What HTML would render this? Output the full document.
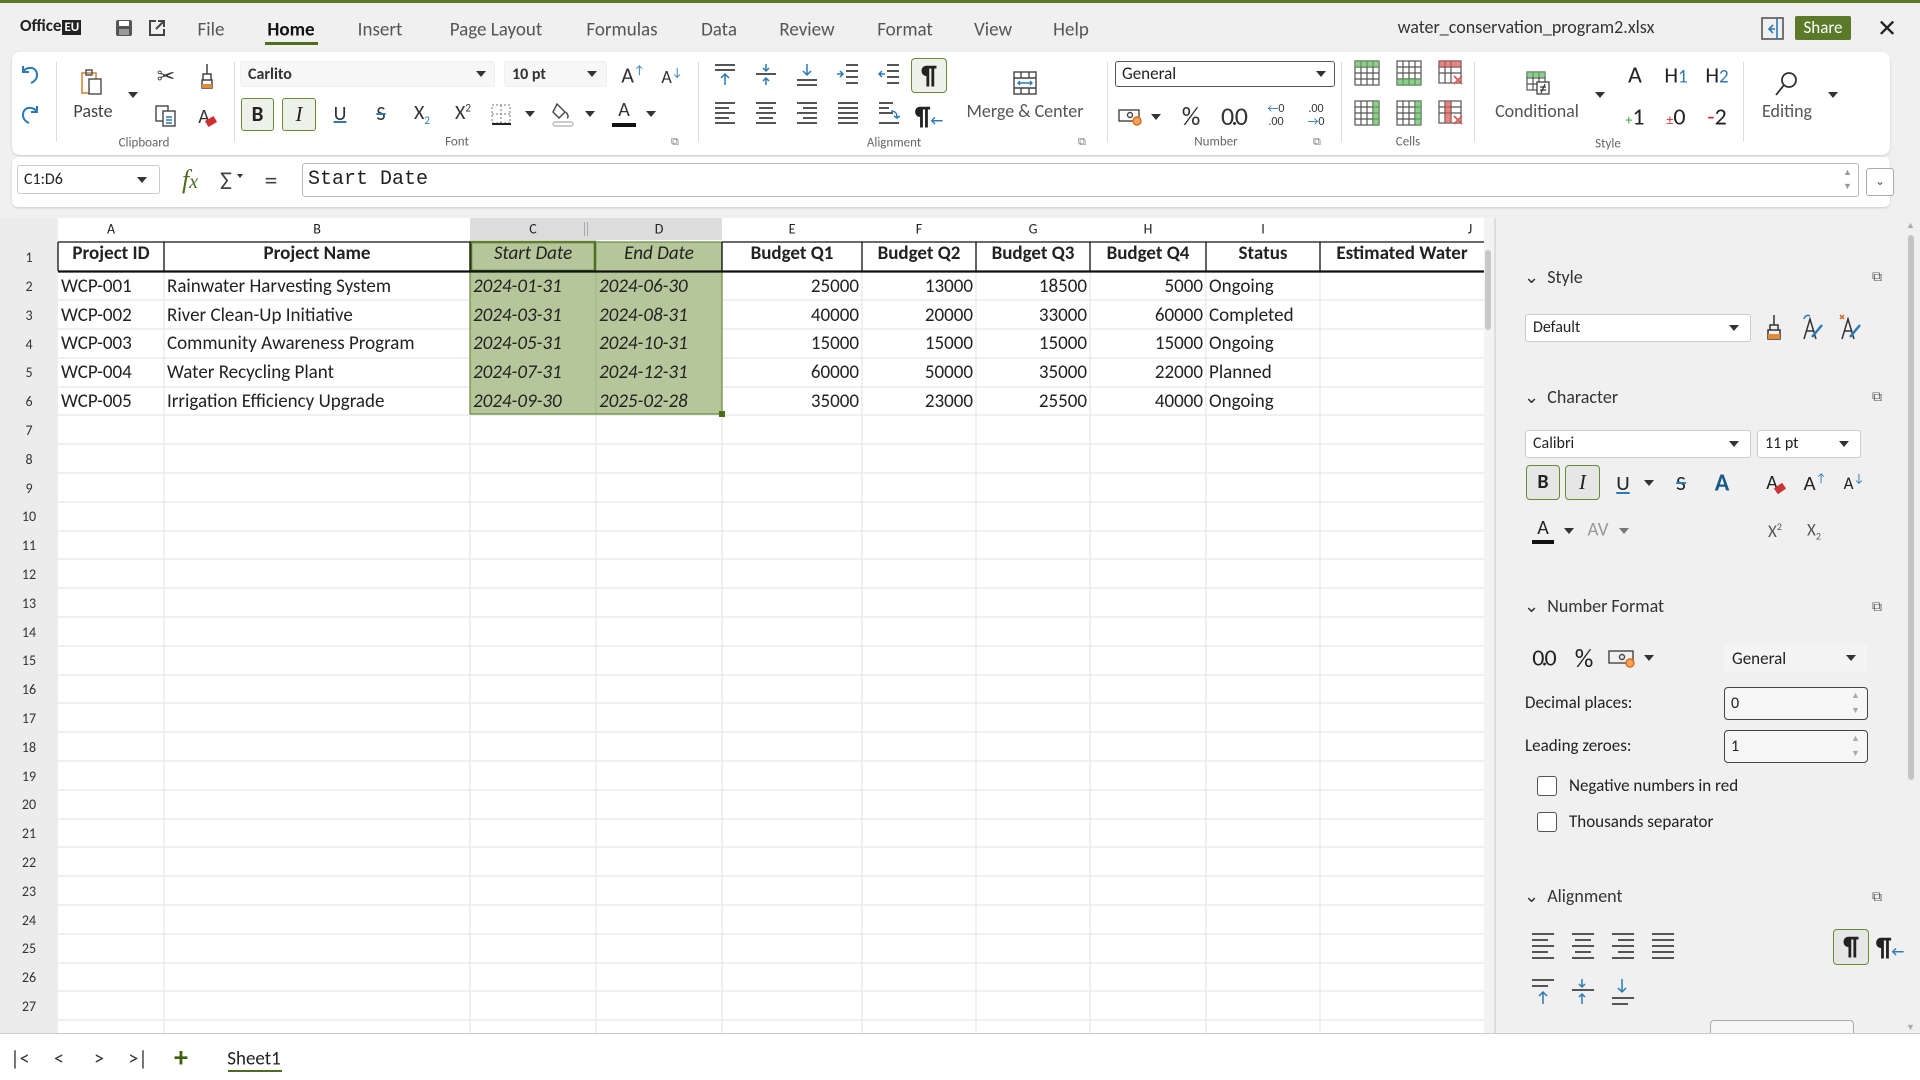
<!DOCTYPE html>
<html><head><meta charset="utf-8">
<style>
*{box-sizing:border-box;margin:0;padding:0}
body{width:1920px;height:1080px;overflow:hidden;background:#f0f0f0;font-family:"Carlito","Liberation Sans",sans-serif;color:#222;position:relative}
.a{position:absolute;white-space:nowrap}
.c{transform:translate(-50%,-50%)}
.tab{font-size:19px;color:#555}
.lbl{font-size:13px;color:#666}
.ib{font-size:20px;color:#333}
.dd{background:#fff;border:1px solid #ccc;border-radius:3px;font-size:16px;padding:3px 7px}
.tri{width:0;height:0;border-left:5px solid transparent;border-right:5px solid transparent;border-top:6px solid #333;position:absolute}
.sep{position:absolute;top:62px;width:1px;height:80px;background:#ddd}
.cell{position:absolute;height:29px;line-height:29px;font-size:19px;overflow:hidden;padding:0 3px}
.rh{position:absolute;left:0;width:58px;text-align:center;font-size:14px;color:#333}
.sb{font-size:18px;color:#333}
</style></head><body>
<div class="a" style="left:0;top:0;width:1920px;height:3px;background:#5a7a2a"></div>
<!-- title row -->
<div class="a" style="left:20px;top:15px;font-size:17px;font-weight:bold;color:#222">Office<span style="background:#222;color:#fff;font-size:13px;padding:0 2px;margin-left:1px">EU</span></div>
<svg class="a" style="left:115px;top:19px" width="18" height="18"><rect x="1" y="1" width="16" height="16" rx="2" fill="#555"/><rect x="4" y="2" width="10" height="5" fill="#fff"/><rect x="4" y="10" width="10" height="6" fill="#999"/></svg>
<svg class="a" style="left:148px;top:19px" width="18" height="18" fill="none" stroke="#444" stroke-width="2"><path d="M8 2H2v14h14v-6M10 2h6v6M16 2 8 10"/></svg>
<div class="a tab c" style="left:211px;top:30px">File</div>
<div class="a c" style="left:291px;top:30px;font-size:19px;font-weight:bold;color:#111">Home</div>
<div class="a" style="left:265px;top:42px;width:53px;height:3px;background:#4e6e1e"></div>
<div class="a tab c" style="left:380px;top:30px">Insert</div>
<div class="a tab c" style="left:496px;top:30px">Page Layout</div>
<div class="a tab c" style="left:622px;top:30px">Formulas</div>
<div class="a tab c" style="left:719px;top:30px">Data</div>
<div class="a tab c" style="left:807px;top:30px">Review</div>
<div class="a tab c" style="left:905px;top:30px">Format</div>
<div class="a tab c" style="left:993px;top:30px">View</div>
<div class="a tab c" style="left:1071px;top:30px">Help</div>
<div class="a c" style="left:1526px;top:27px;font-size:18px;color:#333">water_conservation_program2.xlsx</div>
<svg class="a" style="left:1761px;top:17px" width="23" height="23" fill="none" stroke="#2a7ab8" stroke-width="1.6"><rect x="1" y="1" width="21" height="21" stroke="#555"/><path d="M16 1v21M12 8l-4 4 4 4M8 12h6"/></svg>
<div class="a" style="left:1795px;top:16px;width:56px;height:24px;background:#5a7a2a;color:#fff;font-size:17px;text-align:center;line-height:24px;border-radius:2px">Share</div>
<div class="a c" style="left:1887px;top:29px;font-size:24px;color:#222">✕</div>

<!-- ribbon panel -->
<div class="a" style="left:12px;top:52px;width:1878px;height:103px;background:#fff;border-radius:8px;box-shadow:0 1px 2px #ccc"></div>
<div class="sep" style="left:56px"></div><div class="sep" style="left:234px"></div><div class="sep" style="left:698px"></div><div class="sep" style="left:1107px"></div><div class="sep" style="left:1341px"></div><div class="sep" style="left:1474px"></div><div class="sep" style="left:1743px"></div>
<svg class="a" style="left:18px;top:62px" width="24" height="24" fill="none" stroke="#2a7ab8" stroke-width="2"><path d="M5 4v6h6M5 10c3-6 14-6 14 3 0 4-3 7-6 8"/></svg>
<svg class="a" style="left:18px;top:102px" width="24" height="24" fill="none" stroke="#2a7ab8" stroke-width="2"><path d="M19 4v6h-6M19 10C16 4 5 4 5 13c0 4 3 7 6 8"/></svg>
<svg class="a" style="left:80px;top:69px" width="26" height="28" fill="none" stroke="#555" stroke-width="1.5"><rect x="2" y="4" width="14" height="20" stroke="#d08030"/><rect x="9" y="10" width="12" height="15" fill="#fff"/><rect x="6" y="1" width="6" height="5"/></svg>
<div class="a c ib" style="left:93px;top:111px;font-size:18px;color:#444">Paste</div>
<div class="tri" style="left:128px;top:92px"></div>
<div class="a c ib" style="left:166px;top:76px;font-size:22px">✂</div>
<svg class="a" style="left:198px;top:63px" width="18" height="26" fill="none" stroke="#444" stroke-width="1.5"><path d="M9 1v10M5 11h8v6H5zM4 17h10v8H4z"/><path d="M4 21h10v4H4z" fill="#e08a3a" stroke="none"/></svg>
<svg class="a" style="left:154px;top:104px" width="24" height="24" fill="none" stroke="#444" stroke-width="1.4"><rect x="2" y="2" width="12" height="15"/><rect x="9" y="7" width="12" height="15" fill="#fff"/><path d="M12 13h6M12 16h6M12 19h6" stroke="#2a7ab8"/></svg>
<div class="a c" style="left:204px;top:117px;font-size:20px;color:#333">A</div><div class="a" style="left:206px;top:118px;width:10px;height:7px;background:#d03030;transform:rotate(-30deg)"></div>
<div class="a c lbl" style="left:144px;top:143px">Clipboard</div>

<div class="a dd" style="left:240px;top:61px;width:255px;height:26px;background:#f7f7f7;border-color:#f0f0f0;font-weight:bold;color:#333">Carlito</div><div class="tri" style="left:476px;top:71px"></div>
<div class="a dd" style="left:504px;top:61px;width:103px;height:26px;background:#f7f7f7;border-color:#f0f0f0;font-weight:bold;color:#333">10 pt</div><div class="tri" style="left:587px;top:71px"></div>
<div class="a c" style="left:633px;top:75px;font-size:22px;color:#333">A<sup style="font-size:12px;color:#2a7ab8">↑</sup></div>
<div class="a c" style="left:672px;top:77px;font-size:18px;color:#333">A<sup style="font-size:12px;color:#2a7ab8">↓</sup></div>
<div class="a" style="left:241px;top:98px;width:33px;height:33px;border:1.5px solid #6a8a3a;border-radius:3px;background:#eef0ea;font-size:21px;font-weight:bold;text-align:center;line-height:30px">B</div>
<div class="a" style="left:282px;top:98px;width:34px;height:33px;border:1.5px solid #6a8a3a;border-radius:3px;background:#eef0ea;font-size:21px;font-style:italic;font-family:'Liberation Serif',serif;text-align:center;line-height:30px">I</div>
<div class="a c ib" style="left:340px;top:114px;text-decoration:underline;text-decoration-color:#2a7ab8">U</div>
<div class="a c ib" style="left:381px;top:114px;text-decoration:line-through;text-decoration-color:#2a7ab8">S</div>
<div class="a c ib" style="left:422px;top:114px">X<sub style="font-size:11px;color:#2a7ab8">2</sub></div>
<div class="a c ib" style="left:463px;top:113px">X<sup style="font-size:11px">2</sup></div>
<svg class="a" style="left:490px;top:103px" width="22" height="22" fill="none" stroke="#777" stroke-dasharray="2 2"><rect x="2" y="2" width="18" height="18"/><path d="M11 2v18M2 11h18"/><path d="M2 21h19" stroke="#222" stroke-dasharray="none" stroke-width="2"/></svg>
<div class="tri" style="left:525px;top:111px"></div>
<svg class="a" style="left:552px;top:101px" width="22" height="26" fill="none" stroke="#444" stroke-width="1.4"><path d="M5 3l8 8-6 6-6-6zM14 11c2 3 3 5 1 6" /><rect x="1" y="21" width="20" height="4" rx="2" stroke="#bbb"/></svg>
<div class="tri" style="left:585px;top:111px"></div>
<div class="a c ib" style="left:624px;top:110px">A</div><div class="a" style="left:612px;top:123px;width:24px;height:4px;background:#111"></div>
<div class="tri" style="left:646px;top:111px"></div>
<div class="a c lbl" style="left:457px;top:142px">Font</div>
<div class="a" style="left:671px;top:135px;font-size:11px;color:#777">⧉</div>

<!-- alignment icons -->
<svg class="a" style="left:713px;top:63px" width="240" height="70" fill="none" stroke="#555" stroke-width="2">
<g transform="translate(0,0)"><path d="M2 2h20M2 7h20"/><path d="M12 22V11M8 15l4-4 4 4" stroke="#2a7ab8" stroke-width="1.5"/></g>
<g transform="translate(41,0)"><path d="M2 11h20"/><path d="M12 1v7M9 5l3 3 3-3M12 22v-7M9 18l3-3 3 3" stroke="#2a7ab8" stroke-width="1.5"/></g>
<g transform="translate(82,0)"><path d="M2 17h20M2 22h20"/><path d="M12 1v11M8 8l4 4 4-4" stroke="#2a7ab8" stroke-width="1.5"/></g>
<g transform="translate(123,0)"><path d="M10 2h12M10 8h12M10 14h12M10 20h12"/><path d="M1 11h6M4 8l3 3-3 3" stroke="#2a7ab8" stroke-width="1.5"/></g>
<g transform="translate(164,0)"><path d="M10 2h12M10 8h12M10 14h12M10 20h12"/><path d="M8 11H2M5 8l-3 3 3 3" stroke="#2a7ab8" stroke-width="1.5"/></g>
<g transform="translate(0,38)"><path d="M2 2h20M2 7h14M2 12h20M2 17h14M2 22h20"/></g>
<g transform="translate(41,38)"><path d="M2 2h20M5 7h14M2 12h20M5 17h14M2 22h20"/></g>
<g transform="translate(82,38)"><path d="M2 2h20M8 7h14M2 12h20M8 17h14M2 22h20"/></g>
<g transform="translate(123,38)"><path d="M2 2h20M2 7h20M2 12h20M2 17h20M2 22h20"/></g>
<g transform="translate(164,38)"><path d="M2 2h14M2 7h10M2 12h14M2 22h20"/><path d="M14 10c5 0 6 3 6 7l-3-2M20 17l3-2" stroke="#2a7ab8" stroke-width="1.5"/></g>
</svg>
<div class="a" style="left:911px;top:58px;width:36px;height:35px;border:1.5px solid #6a8a3a;border-radius:4px;background:#eef0ea;font-size:26px;text-align:center;line-height:32px;font-weight:bold">¶</div>
<div class="a c" style="left:929px;top:116px;font-size:26px;font-weight:bold">¶<span style="font-size:14px;color:#2a7ab8">←</span></div>
<svg class="a" style="left:1012px;top:70px" width="26" height="26" fill="none" stroke="#444" stroke-width="1.4"><rect x="2" y="2" width="22" height="22"/><path d="M2 8h22M2 18h22M9 2v6M17 2v6M9 18v6M17 18v6"/><path d="M6 13h14M8 11l-2 2 2 2M18 11l2 2-2 2" stroke="#2a7ab8"/></svg>
<div class="a c" style="left:1025px;top:111px;font-size:18px;color:#555">Merge &amp; Center</div>
<div class="a c lbl" style="left:894px;top:143px">Alignment</div>
<div class="a" style="left:1078px;top:135px;font-size:11px;color:#777">⧉</div>

<div class="a dd" style="left:1115px;top:61px;width:220px;height:26px;border:1.5px solid #555;font-size:17px;padding:1px 6px">General</div><div class="tri" style="left:1316px;top:71px"></div>
<svg class="a" style="left:1118px;top:106px" width="26" height="22" fill="none" stroke="#444" stroke-width="1.4"><rect x="1" y="4" width="20" height="11"/><circle cx="12" cy="9" r="2.5"/><circle cx="19" cy="15" r="4" fill="#f3a460" stroke="#e06a10"/></svg>
<div class="tri" style="left:1151px;top:114px"></div>
<div class="a c" style="left:1191px;top:116px;font-size:26px;color:#333">%</div>
<div class="a c" style="left:1233px;top:116px;font-size:26px;color:#333;letter-spacing:-3px">0.0</div>
<div class="a c" style="left:1276px;top:116px;font-size:12px;line-height:13px;text-align:center;color:#333"><span style="color:#2a7ab8">←</span>0<br>.00</div>
<div class="a c" style="left:1316px;top:116px;font-size:12px;line-height:13px;text-align:center;color:#333">.00<br><span style="color:#2a7ab8">→</span>0</div>
<div class="a c lbl" style="left:1216px;top:142px">Number</div>
<div class="a" style="left:1313px;top:135px;font-size:11px;color:#777">⧉</div>

<!-- cells -->
<svg class="a" style="left:1353px;top:59px" width="112" height="70" fill="none" stroke="#555" stroke-width="1.2">
<g><rect x="2" y="2" width="24" height="24"/><path d="M2 8h24M2 14h24M2 20h24M8 2v24M14 2v24M20 2v24"/><rect x="2" y="2" width="24" height="6" fill="#5cb85c" stroke="none" opacity=".7"/></g>
<g transform="translate(42,0)"><rect x="2" y="2" width="24" height="24"/><path d="M2 8h24M2 14h24M2 20h24M8 2v24M14 2v24M20 2v24"/><rect x="2" y="20" width="24" height="6" fill="#5cb85c" stroke="none" opacity=".7"/></g>
<g transform="translate(84,0)"><rect x="2" y="2" width="22" height="22"/><path d="M2 8h22M2 14h22M8 2v22M14 2v22"/><rect x="2" y="2" width="22" height="6" fill="#d9534f" stroke="none" opacity=".7"/><path d="M17 17l8 8M25 17l-8 8" stroke="#d9534f" stroke-width="1.6"/></g>
<g transform="translate(0,40)"><rect x="2" y="2" width="24" height="24"/><path d="M2 8h24M2 14h24M2 20h24M8 2v24M14 2v24M20 2v24"/><rect x="20" y="2" width="6" height="24" fill="#5cb85c" stroke="none" opacity=".7"/></g>
<g transform="translate(42,40)"><rect x="2" y="2" width="24" height="24"/><path d="M2 8h24M2 14h24M2 20h24M8 2v24M14 2v24M20 2v24"/><rect x="20" y="2" width="6" height="24" fill="#5cb85c" stroke="none" opacity=".7"/></g>
<g transform="translate(84,40)"><rect x="2" y="2" width="22" height="22"/><path d="M2 8h22M2 14h22M8 2v22M14 2v22"/><rect x="8" y="2" width="6" height="22" fill="#d9534f" stroke="none" opacity=".7"/><path d="M17 17l8 8M25 17l-8 8" stroke="#d9534f" stroke-width="1.6"/></g>
</svg>
<div class="a c lbl" style="left:1408px;top:142px">Cells</div>

<svg class="a" style="left:1525px;top:70px" width="26" height="26" fill="none" stroke="#555" stroke-width="1.2"><rect x="2" y="2" width="18" height="18"/><path d="M2 8h18M2 14h18M8 2v18M14 2v18"/><rect x="2" y="2" width="18" height="5" fill="#5cb85c" stroke="none" opacity=".7"/><rect x="12" y="12" width="12" height="12" fill="#fff" stroke="#333"/><path d="M15 17h6M15 20h6M20 14l-4 9" stroke="#333"/></svg>
<div class="a c" style="left:1537px;top:111px;font-size:18px;color:#555">Conditional</div>
<div class="tri" style="left:1595px;top:92px"></div>
<div class="a c" style="left:1635px;top:75px;font-size:24px">A</div>
<div class="a c" style="left:1676px;top:75px;font-size:22px">H<span style="color:#2a7ab8;font-size:19px">1</span></div>
<div class="a c" style="left:1717px;top:75px;font-size:22px">H<span style="color:#2a7ab8;font-size:19px">2</span></div>
<div class="a c" style="left:1635px;top:117px;font-size:24px"><span style="color:#3a9a3a;font-size:14px">+</span>1</div>
<div class="a c" style="left:1676px;top:117px;font-size:24px"><span style="color:#c33;font-size:14px">±</span>0</div>
<div class="a c" style="left:1717px;top:117px;font-size:24px"><span style="color:#c33">-</span>2</div>
<div class="a c lbl" style="left:1608px;top:144px">Style</div>
<svg class="a" style="left:1774px;top:70px" width="26" height="28" fill="none" stroke="#333" stroke-width="1.8"><circle cx="15" cy="10" r="7"/><path d="M10 15 2 25"/></svg>
<div class="a c" style="left:1787px;top:111px;font-size:18px;color:#555">Editing</div>
<div class="tri" style="left:1828px;top:92px"></div>

<!-- formula bar -->
<div class="a" style="left:12px;top:157px;width:1878px;height:50px;background:#fff;border-radius:6px;box-shadow:0 1px 2px #ccc"></div>
<div class="a dd" style="left:17px;top:165px;width:143px;height:29px;font-size:16px;padding:4px 6px">C1:D6</div><div class="tri" style="left:137px;top:177px"></div>
<div class="a c" style="left:190px;top:180px;font-size:26px;font-style:italic;font-family:'Liberation Serif',serif;color:#4e6e1e">f<span style="font-size:20px">x</span></div>
<div class="a c" style="left:226px;top:180px;font-size:26px;color:#444">Σ</div><div class="tri" style="left:237px;top:174px;border-width:4px 3px;border-left-width:3px;border-right-width:3px;border-top-width:4px"></div>
<div class="a c" style="left:271px;top:180px;font-size:26px;color:#444">=</div>
<div class="a" style="left:302px;top:163px;width:1557px;height:34px;border:1px solid #bbb;border-radius:3px;background:#fff;font-family:'Liberation Mono',monospace;font-size:20px;padding:4px 5px">Start Date</div>
<div class="a" style="left:1843px;top:166px;font-size:9px;color:#999;line-height:14px">▲<br>▼</div>
<div class="a" style="left:1866px;top:168px;width:28px;height:28px;border:1px solid #aaa;border-radius:3px;background:#fff;font-size:12px;text-align:center;line-height:26px;color:#555">⌄</div>

<!-- grid -->
<div class="a" style="left:58px;top:218px;width:1426px;height:817px;background:#fff"></div>
<div class="a" style="left:0;top:218px;width:58px;height:817px;background:#ececec"></div>
<div class="a" style="left:470px;top:218px;width:252px;height:22px;background:#dcdcdc"></div>
<svg class="a" style="left:0;top:218px" width="1484" height="817">
<g stroke="#e2e2e2" stroke-width="1">
<path d="M164 22V817M470 22V817M596 22V817M722 22V817M862 22V817M976 22V817M1090 22V817M1206 22V817M1320 22V817"/>
<path id="hl" d="M58 82H1484M58 111H1484M58 140H1484M58 169H1484M58 197H1484M58 226H1484M58 255H1484M58 284H1484M58 313H1484M58 341H1484M58 370H1484M58 399H1484M58 428H1484M58 457H1484M58 485H1484M58 514H1484M58 543H1484M58 572H1484M58 601H1484M58 629H1484M58 658H1484M58 687H1484M58 716H1484M58 745H1484M58 773H1484M58 802H1484"/>
</g>
<rect x="470" y="24" width="252" height="172" fill="#b4c69a"/>
<path d="M596 54V196" stroke="#9fb482"/>
<rect x="471" y="24" width="124" height="29" fill="none" stroke="#4e6e1e" stroke-width="2.5"/>
<rect x="470" y="24" width="252" height="172" fill="none" stroke="#6a8a3a" stroke-width="1.2"/>
<rect x="719" y="193" width="6" height="6" fill="#4e6e1e"/>
<g stroke="#111" stroke-width="1.3"><path d="M58 24H470M722 24H1484M58 24V53M164 24V53M470 24V53M722 24V53M862 24V53M976 24V53M1090 24V53M1206 24V53M1320 24V53"/></g>
<path d="M58 53.5H1484" stroke="#111" stroke-width="2.2"/>
</svg>
<div class="a" style="left:1484px;top:218px;width:10px;height:817px;background:#f3f3f3"></div>
<div class="a" style="left:1485px;top:250px;width:6px;height:80px;background:#c8c8c8;border-radius:3px"></div>
<!-- col headers -->
<div class="a c" style="left:111px;top:229px;font-size:14px">A</div>
<div class="a c" style="left:317px;top:229px;font-size:14px">B</div>
<div class="a c" style="left:533px;top:229px;font-size:14px">C</div>
<div class="a" style="left:584px;top:222px;width:4px;height:14px;border-left:1px solid #aaa;border-right:1px solid #aaa"></div>
<div class="a c" style="left:659px;top:229px;font-size:14px">D</div>
<div class="a c" style="left:792px;top:229px;font-size:14px">E</div>
<div class="a c" style="left:919px;top:229px;font-size:14px">F</div>
<div class="a c" style="left:1033px;top:229px;font-size:14px">G</div>
<div class="a c" style="left:1148px;top:229px;font-size:14px">H</div>
<div class="a c" style="left:1263px;top:229px;font-size:14px">I</div>
<div class="a c" style="left:1470px;top:229px;font-size:14px">J</div>
<!-- row numbers -->
<div class="rh" style="top:249px">1</div><div class="rh" style="top:278px">2</div><div class="rh" style="top:307px">3</div><div class="rh" style="top:336px">4</div><div class="rh" style="top:364px">5</div><div class="rh" style="top:393px">6</div><div class="rh" style="top:422px">7</div><div class="rh" style="top:451px">8</div><div class="rh" style="top:480px">9</div><div class="rh" style="top:508px">10</div><div class="rh" style="top:537px">11</div><div class="rh" style="top:566px">12</div><div class="rh" style="top:595px">13</div><div class="rh" style="top:624px">14</div><div class="rh" style="top:652px">15</div><div class="rh" style="top:681px">16</div><div class="rh" style="top:710px">17</div><div class="rh" style="top:739px">18</div><div class="rh" style="top:768px">19</div><div class="rh" style="top:796px">20</div><div class="rh" style="top:825px">21</div><div class="rh" style="top:854px">22</div><div class="rh" style="top:883px">23</div><div class="rh" style="top:912px">24</div><div class="rh" style="top:940px">25</div><div class="rh" style="top:969px">26</div><div class="rh" style="top:998px">27</div>
<!-- row1 headers -->
<div style="font-weight:bold">
<div class="cell" style="left:58px;top:239px;width:106px;text-align:center">Project ID</div>
<div class="cell" style="left:164px;top:239px;width:306px;text-align:center">Project Name</div>
<div class="cell" style="left:470px;top:239px;width:126px;text-align:center;font-style:italic;font-weight:normal">Start Date</div>
<div class="cell" style="left:596px;top:239px;width:126px;text-align:center;font-style:italic;font-weight:normal">End Date</div>
<div class="cell" style="left:722px;top:239px;width:140px;text-align:center">Budget Q1</div>
<div class="cell" style="left:862px;top:239px;width:114px;text-align:center">Budget Q2</div>
<div class="cell" style="left:976px;top:239px;width:114px;text-align:center">Budget Q3</div>
<div class="cell" style="left:1090px;top:239px;width:116px;text-align:center">Budget Q4</div>
<div class="cell" style="left:1206px;top:239px;width:114px;text-align:center">Status</div>
<div class="cell" style="left:1320px;top:239px;width:164px;text-align:center">Estimated Water</div>
</div>
<!-- data rows -->
<div class="cell" style="left:58px;top:272px">WCP-001</div><div class="cell" style="left:164px;top:272px">Rainwater Harvesting System</div><div class="cell" style="left:470px;top:272px;font-style:italic">2024-01-31</div><div class="cell" style="left:596px;top:272px;font-style:italic">2024-06-30</div><div class="cell" style="left:722px;top:272px;width:140px;text-align:right">25000</div><div class="cell" style="left:862px;top:272px;width:114px;text-align:right">13000</div><div class="cell" style="left:976px;top:272px;width:114px;text-align:right">18500</div><div class="cell" style="left:1090px;top:272px;width:116px;text-align:right">5000</div><div class="cell" style="left:1206px;top:272px">Ongoing</div>
<div class="cell" style="left:58px;top:301px">WCP-002</div><div class="cell" style="left:164px;top:301px">River Clean-Up Initiative</div><div class="cell" style="left:470px;top:301px;font-style:italic">2024-03-31</div><div class="cell" style="left:596px;top:301px;font-style:italic">2024-08-31</div><div class="cell" style="left:722px;top:301px;width:140px;text-align:right">40000</div><div class="cell" style="left:862px;top:301px;width:114px;text-align:right">20000</div><div class="cell" style="left:976px;top:301px;width:114px;text-align:right">33000</div><div class="cell" style="left:1090px;top:301px;width:116px;text-align:right">60000</div><div class="cell" style="left:1206px;top:301px">Completed</div>
<div class="cell" style="left:58px;top:329px">WCP-003</div><div class="cell" style="left:164px;top:329px">Community Awareness Program</div><div class="cell" style="left:470px;top:329px;font-style:italic">2024-05-31</div><div class="cell" style="left:596px;top:329px;font-style:italic">2024-10-31</div><div class="cell" style="left:722px;top:329px;width:140px;text-align:right">15000</div><div class="cell" style="left:862px;top:329px;width:114px;text-align:right">15000</div><div class="cell" style="left:976px;top:329px;width:114px;text-align:right">15000</div><div class="cell" style="left:1090px;top:329px;width:116px;text-align:right">15000</div><div class="cell" style="left:1206px;top:329px">Ongoing</div>
<div class="cell" style="left:58px;top:358px">WCP-004</div><div class="cell" style="left:164px;top:358px">Water Recycling Plant</div><div class="cell" style="left:470px;top:358px;font-style:italic">2024-07-31</div><div class="cell" style="left:596px;top:358px;font-style:italic">2024-12-31</div><div class="cell" style="left:722px;top:358px;width:140px;text-align:right">60000</div><div class="cell" style="left:862px;top:358px;width:114px;text-align:right">50000</div><div class="cell" style="left:976px;top:358px;width:114px;text-align:right">35000</div><div class="cell" style="left:1090px;top:358px;width:116px;text-align:right">22000</div><div class="cell" style="left:1206px;top:358px">Planned</div>
<div class="cell" style="left:58px;top:387px">WCP-005</div><div class="cell" style="left:164px;top:387px">Irrigation Efficiency Upgrade</div><div class="cell" style="left:470px;top:387px;font-style:italic">2024-09-30</div><div class="cell" style="left:596px;top:387px;font-style:italic">2025-02-28</div><div class="cell" style="left:722px;top:387px;width:140px;text-align:right">35000</div><div class="cell" style="left:862px;top:387px;width:114px;text-align:right">23000</div><div class="cell" style="left:976px;top:387px;width:114px;text-align:right">25500</div><div class="cell" style="left:1090px;top:387px;width:116px;text-align:right">40000</div><div class="cell" style="left:1206px;top:387px">Ongoing</div>

<!-- sidebar -->
<div class="a" style="left:1494px;top:218px;width:2px;height:817px;background:#ddd"></div>
<div class="a" style="left:1908px;top:235px;width:6px;height:545px;background:#c4c4c4;border-radius:3px"></div>
<div class="a" style="left:1906px;top:220px;font-size:9px;color:#aaa">▲</div>
<div class="a" style="left:1906px;top:1022px;font-size:9px;color:#aaa">▼</div>
<div class="a sb" style="left:1524px;top:266px">⌄&nbsp; Style</div>
<div class="a sb" style="left:1524px;top:386px">⌄&nbsp; Character</div>
<div class="a sb" style="left:1524px;top:595px">⌄&nbsp; Number Format</div>
<div class="a sb" style="left:1524px;top:885px">⌄&nbsp; Alignment</div>
<div class="a" style="left:1872px;top:268px;font-size:14px;color:#555">⧉</div>
<div class="a" style="left:1872px;top:388px;font-size:14px;color:#555">⧉</div>
<div class="a" style="left:1872px;top:598px;font-size:14px;color:#555">⧉</div>
<div class="a" style="left:1872px;top:888px;font-size:14px;color:#555">⧉</div>
<div class="a dd" style="left:1525px;top:314px;width:226px;height:28px;font-size:16px">Default</div><div class="tri" style="left:1729px;top:325px"></div>
<svg class="a" style="left:1764px;top:313px" width="100" height="30" fill="none" stroke="#333" stroke-width="1.5"><path d="M10 2v10M6 12h8v5H6zM4 17h12v9H4z"/><rect x="4" y="21" width="12" height="5" fill="#e08a3a" stroke="none"/>
<g transform="translate(36,0)"><path d="M4 26 10 6l6 20M6 18h8"/><path d="M12 24l10-12" stroke="#2a7ab8" stroke-width="2.5"/><path d="M4 6a4 4 0 0 1 6-3" stroke="#2a7ab8"/></g>
<g transform="translate(74,0)"><path d="M4 26 10 6l6 20M6 18h8"/><path d="M12 24l10-12" stroke="#2a7ab8" stroke-width="2.5"/><path d="M2 2l4 4M6 2 2 6" stroke="#e0601a"/></g></svg>
<div class="a dd" style="left:1525px;top:430px;width:226px;height:28px;font-size:16px">Calibri</div><div class="tri" style="left:1729px;top:441px"></div>
<div class="a dd" style="left:1757px;top:430px;width:104px;height:28px;font-size:16px">11 pt</div><div class="tri" style="left:1839px;top:441px"></div>
<div class="a" style="left:1526px;top:465px;width:34px;height:35px;border:1.5px solid #6a8a3a;border-radius:4px;background:#e6e6e6;font-size:20px;font-weight:bold;text-align:center;line-height:32px">B</div>
<div class="a" style="left:1565px;top:465px;width:35px;height:35px;border:1.5px solid #6a8a3a;border-radius:4px;background:#e6e6e6;font-size:21px;font-style:italic;font-family:'Liberation Serif',serif;text-align:center;line-height:32px">I</div>
<div class="a c" style="left:1623px;top:483px;font-size:21px;text-decoration:underline;text-decoration-color:#2a7ab8">U</div><div class="tri" style="left:1644px;top:480px"></div>
<div class="a c" style="left:1681px;top:483px;font-size:21px;text-decoration:line-through;text-decoration-color:#2a7ab8">S</div>
<div class="a c" style="left:1722px;top:483px;font-size:24px;font-weight:bold;color:#1a5a8a">A</div>
<div class="a c" style="left:1772px;top:483px;font-size:20px">A</div><div class="a" style="left:1775px;top:485px;width:10px;height:7px;background:#c33;transform:rotate(-35deg)"></div>
<div class="a c" style="left:1815px;top:483px;font-size:21px">A<sup style="font-size:12px;color:#2a7ab8">↑</sup></div>
<div class="a c" style="left:1854px;top:483px;font-size:17px">A<sup style="font-size:12px;color:#2a7ab8">↓</sup></div>
<div class="a c" style="left:1543px;top:528px;font-size:20px">A</div><div class="a" style="left:1532px;top:540px;width:22px;height:4px;background:#111"></div><div class="tri" style="left:1564px;top:528px"></div>
<div class="a c" style="left:1598px;top:530px;font-size:19px;color:#999">AV</div><div class="tri" style="left:1619px;top:528px;border-top-color:#777"></div>
<div class="a c" style="left:1775px;top:531px;font-size:17px;color:#555">X<sup style="font-size:10px">2</sup></div>
<div class="a c" style="left:1814px;top:531px;font-size:17px;color:#555">X<sub style="font-size:10px">2</sub></div>
<div class="a c" style="left:1543px;top:658px;font-size:24px;letter-spacing:-3px">0.0</div>
<div class="a c" style="left:1584px;top:658px;font-size:26px">%</div>
<svg class="a" style="left:1608px;top:648px" width="30" height="22" fill="none" stroke="#444" stroke-width="1.4"><rect x="1" y="3" width="24" height="12"/><circle cx="14" cy="9" r="2.5"/><circle cx="22" cy="15" r="4" fill="#f3a460" stroke="#e06a10"/></svg>
<div class="tri" style="left:1644px;top:655px"></div>
<div class="a dd" style="left:1724px;top:644px;width:143px;height:28px;border-color:#f4f4f4;background:#f4f4f4;font-size:17px">General</div><div class="tri" style="left:1846px;top:655px"></div>
<div class="a" style="left:1525px;top:692px;font-size:17px">Decimal places:</div>
<div class="a" style="left:1525px;top:735px;font-size:17px">Leading zeroes:</div>
<div class="a" style="left:1724px;top:687px;width:144px;height:33px;border:1.5px solid #444;border-radius:4px;background:#f6f6f6;font-size:16px;padding:6px 6px">0</div>
<div class="a" style="left:1724px;top:730px;width:144px;height:33px;border:1.5px solid #444;border-radius:4px;background:#f6f6f6;font-size:16px;padding:6px 6px">1</div>
<div class="a" style="left:1851px;top:688px;font-size:9px;line-height:15px;color:#aaa">▲<br>▼</div>
<div class="a" style="left:1851px;top:731px;font-size:9px;line-height:15px;color:#aaa">▲<br>▼</div>
<div class="a" style="left:1537px;top:776px;width:20px;height:20px;border:1.5px solid #555;border-radius:3px;background:#fff"></div>
<div class="a" style="left:1569px;top:775px;font-size:17px">Negative numbers in red</div>
<div class="a" style="left:1537px;top:812px;width:20px;height:20px;border:1.5px solid #555;border-radius:3px;background:#fff"></div>
<div class="a" style="left:1569px;top:811px;font-size:17px">Thousands separator</div>
<svg class="a" style="left:1530px;top:932px" width="150" height="100" fill="none" stroke="#555" stroke-width="2">
<path d="M2 2h22M2 8h16M2 14h22M2 20h16M2 26h22"/>
<g transform="translate(40,0)"><path d="M2 2h22M5 8h16M2 14h22M5 20h16M2 26h22"/></g>
<g transform="translate(80,0)"><path d="M2 2h22M8 8h16M2 14h22M8 20h16M2 26h22"/></g>
<g transform="translate(120,0)"><path d="M2 2h22M2 8h22M2 14h22M2 20h22M2 26h22"/></g>
<g transform="translate(0,46)"><path d="M2 2h22M2 8h16"/><path d="M13 26V14M9 18l4-4 4 4" stroke="#2a7ab8" stroke-width="1.5"/></g>
<g transform="translate(40,46)"><path d="M2 12h22"/><path d="M12 1v8M9 6l3 3 3-3M12 26v-10M9 19l3-3 3 3" stroke="#2a7ab8" stroke-width="1.5"/></g>
<g transform="translate(80,46)"><path d="M2 20h22M2 26h16"/><path d="M12 1v13M8 10l4 4 4-4" stroke="#2a7ab8" stroke-width="1.5"/></g>
</svg>
<div class="a" style="left:1833px;top:929px;width:36px;height:36px;border:1.5px solid #6a8a3a;border-radius:4px;background:#e6e6e6;font-size:26px;font-weight:bold;text-align:center;line-height:33px">¶</div>
<div class="a c" style="left:1890px;top:947px;font-size:26px;font-weight:bold">¶<span style="font-size:14px;color:#2a7ab8">←</span></div>
<div class="a" style="left:1710px;top:1020px;width:144px;height:20px;border:1px solid #aaa;border-radius:4px 4px 0 0;background:#f6f6f6"></div>

<!-- bottom bar -->
<div class="a" style="left:0;top:1033px;width:1920px;height:47px;background:#fff;border-top:1px solid #ccc"></div>
<div class="a c" style="left:20px;top:1059px;font-size:20px;color:#333">|&lt;</div>
<div class="a c" style="left:59px;top:1059px;font-size:20px;color:#333">&lt;</div>
<div class="a c" style="left:99px;top:1059px;font-size:20px;color:#333">&gt;</div>
<div class="a c" style="left:138px;top:1059px;font-size:20px;color:#333">&gt;|</div>
<div class="a c" style="left:181px;top:1057px;font-size:28px;color:#3e6010;font-weight:bold">+</div>
<div class="a c" style="left:254px;top:1059px;font-size:19px;color:#222">Sheet1</div>
<div class="a" style="left:228px;top:1070px;width:54px;height:2px;background:#4e6e1e"></div>
</body></html>
